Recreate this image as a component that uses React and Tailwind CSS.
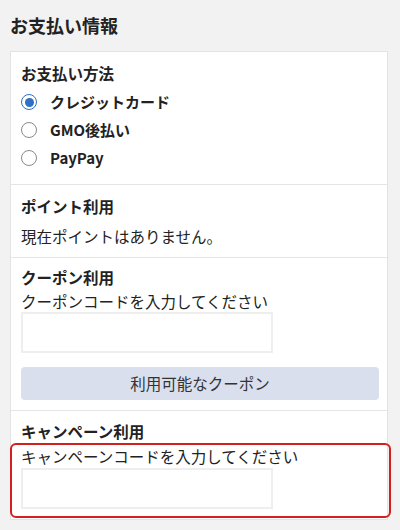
import React from "react";

function Radio({ checked, label }) {
  return (
    <label className="flex h-[28px] items-center">
      <span
        className={
          checked
            ? "flex h-[16px] w-[16px] items-center justify-center rounded-full border-[1.5px] border-[#2f6fc4] bg-white"
            : "flex h-[16px] w-[16px] items-center justify-center rounded-full border-[1.5px] border-[#8a8a8a] bg-white"
        }
      >
        {checked && <span className="h-[9px] w-[9px] rounded-full bg-[#2f6fc4]" />}
      </span>
      <span
        className="ml-[13px] text-[15px] font-bold leading-[22px] text-[#222]"
        style={{ fontFamily: '"Liberation Sans Narrow", "Noto Sans CJK JP", sans-serif' }}
      >
        {label}
      </span>
    </label>
  );
}

export default function App() {
  return (
    <div
      className="min-h-[530px] w-[400px] bg-[#f2f2f2] text-[#222]"
      style={{ fontFamily: '"Noto Sans CJK JP", "Noto Sans", sans-serif' }}
    >
      <h2 className="px-[10px] pt-[12px] pb-[13px] text-[18px] font-bold leading-[26px]">お支払い情報</h2>
      <div className="ml-[10px] w-[378px] border border-[#e3e3e3] bg-white">
        <section className="px-[10px] pt-[10px] pb-[12px]">
          <h3 className="text-[15.5px] font-bold leading-[22px]">お支払い方法</h3>
          <div className="mt-[4px] flex flex-col">
            <Radio checked label="クレジットカード" />
            <Radio label="GMO後払い" />
            <Radio label="PayPay" />
          </div>
        </section>
        <section className="border-t border-[#e5e5e5] px-[10px] pt-[10px] pb-[10px]">
          <h3 className="text-[15.5px] font-bold leading-[22px]">ポイント利用</h3>
          <p className="mt-[8px] text-[15.5px] leading-[22px]">現在ポイントはありません。</p>
        </section>
        <section className="border-t border-[#e5e5e5] px-[10px] pt-[8px] pb-[10px]">
          <h3 className="text-[15.5px] font-bold leading-[22px]">クーポン利用</h3>
          <p className="mt-[2px] text-[15.5px] leading-[22px]">クーポンコードを入力してください</p>
          <div className="h-[41px] w-[252px] border-2 border-[#eeeeee] bg-white" />
          <button className="mt-[14px] flex h-[33px] w-[358px] items-center justify-center rounded-[4px] bg-[#dadfee] text-[15.5px] text-[#333]">
            利用可能なクーポン
          </button>
        </section>
        <section className="relative border-t border-[#e5e5e5] px-[10px] pt-[9px] pb-[10px]">
          <h3 className="text-[15.5px] font-bold leading-[22px]">キャンペーン利用</h3>
          <p className="mt-[3px] text-[15.5px] leading-[22px]">キャンペーンコードを入力してください</p>
          <div className="mt-[1px] h-[41px] w-[252px] border-2 border-[#eeeeee] bg-white" />
          <div className="pointer-events-none absolute left-[-1px] top-[32px] h-[75px] w-[381px] rounded-[6px] border-[2.5px] border-[#d2201d]" />
        </section>
      </div>
    </div>
  );
}
